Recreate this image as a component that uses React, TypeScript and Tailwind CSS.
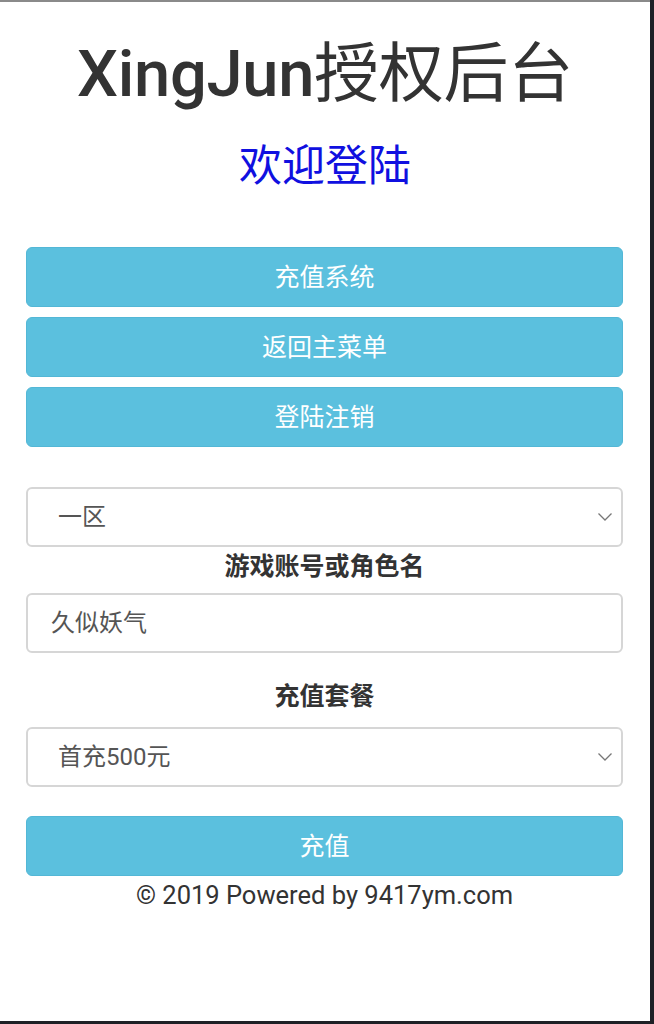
import React from "react";

const font = { fontFamily: 'Roboto, "Noto Sans CJK SC", sans-serif' };

function Chevron() {
  return (
    <svg width="16" height="10" viewBox="0 0 16 10" className="absolute right-[8px] top-1/2 -translate-y-1/2">
      <path d="M1.5 1.5 L8 8 L14.5 1.5" fill="none" stroke="#777" strokeWidth="1.3" />
    </svg>
  );
}

function Btn({ children }: { children: React.ReactNode }) {
  return (
    <div className="h-[60px] w-full rounded-[6px] bg-[#5bc0de] border border-[#53b7d6] flex items-center justify-center text-white text-[25px] leading-none">
      {children}
    </div>
  );
}

function Field({ children, select, pl }: { children: React.ReactNode; select?: boolean; pl: string }) {
  return (
    <div className={`relative h-[60px] w-full rounded-[6px] border-2 border-[#d6d6d6] bg-white flex items-center text-[24px] text-[#555] leading-none ${pl}`}>
      {children}
      {select && <Chevron />}
    </div>
  );
}

export default function App() {
  return (
    <div className="w-[654px] h-[1024px] bg-[#1e2026] overflow-hidden" style={font}>
      <div className="w-[650px] h-[1021px] bg-white border-t-2 border-[#8a8a8a] flex flex-col items-center">
        <h1 className="mt-[32px] text-[65px] leading-[80px] text-[#333] font-normal tracking-[-0.3px]">
          <span className="font-medium">XingJun</span>授权后台
        </h1>
        <div className="mt-[25px] text-[43px] leading-[54px] text-[#1010e0]">欢迎登陆</div>
        <div className="mt-[54px] w-[597px] mr-[1px] flex flex-col gap-[10px]">
          <Btn>充值系统</Btn>
          <Btn>返回主菜单</Btn>
          <Btn>登陆注销</Btn>
        </div>
        <div className="mt-[40px] w-[597px] mr-[1px] flex flex-col">
          <Field select pl="pl-[30px]">一区</Field>
          <div className="h-[46px] pb-[6px] flex items-center justify-center text-[25px] font-bold text-[#333]">游戏账号或角色名</div>
          <Field pl="pl-[23px]">久似妖气</Field>
          <div className="h-[74px] pt-[14px] flex items-center justify-center text-[25px] font-bold text-[#333]">充值套餐</div>
          <Field select pl="pl-[30px]">首充500元</Field>
          <div className="mt-[29px]">
            <Btn>充值</Btn>
          </div>
          <div className="mt-[1px] text-center text-[25.5px] leading-[36px] text-[#333]">© 2019 Powered by 9417ym.com</div>
        </div>
      </div>
    </div>
  );
}
